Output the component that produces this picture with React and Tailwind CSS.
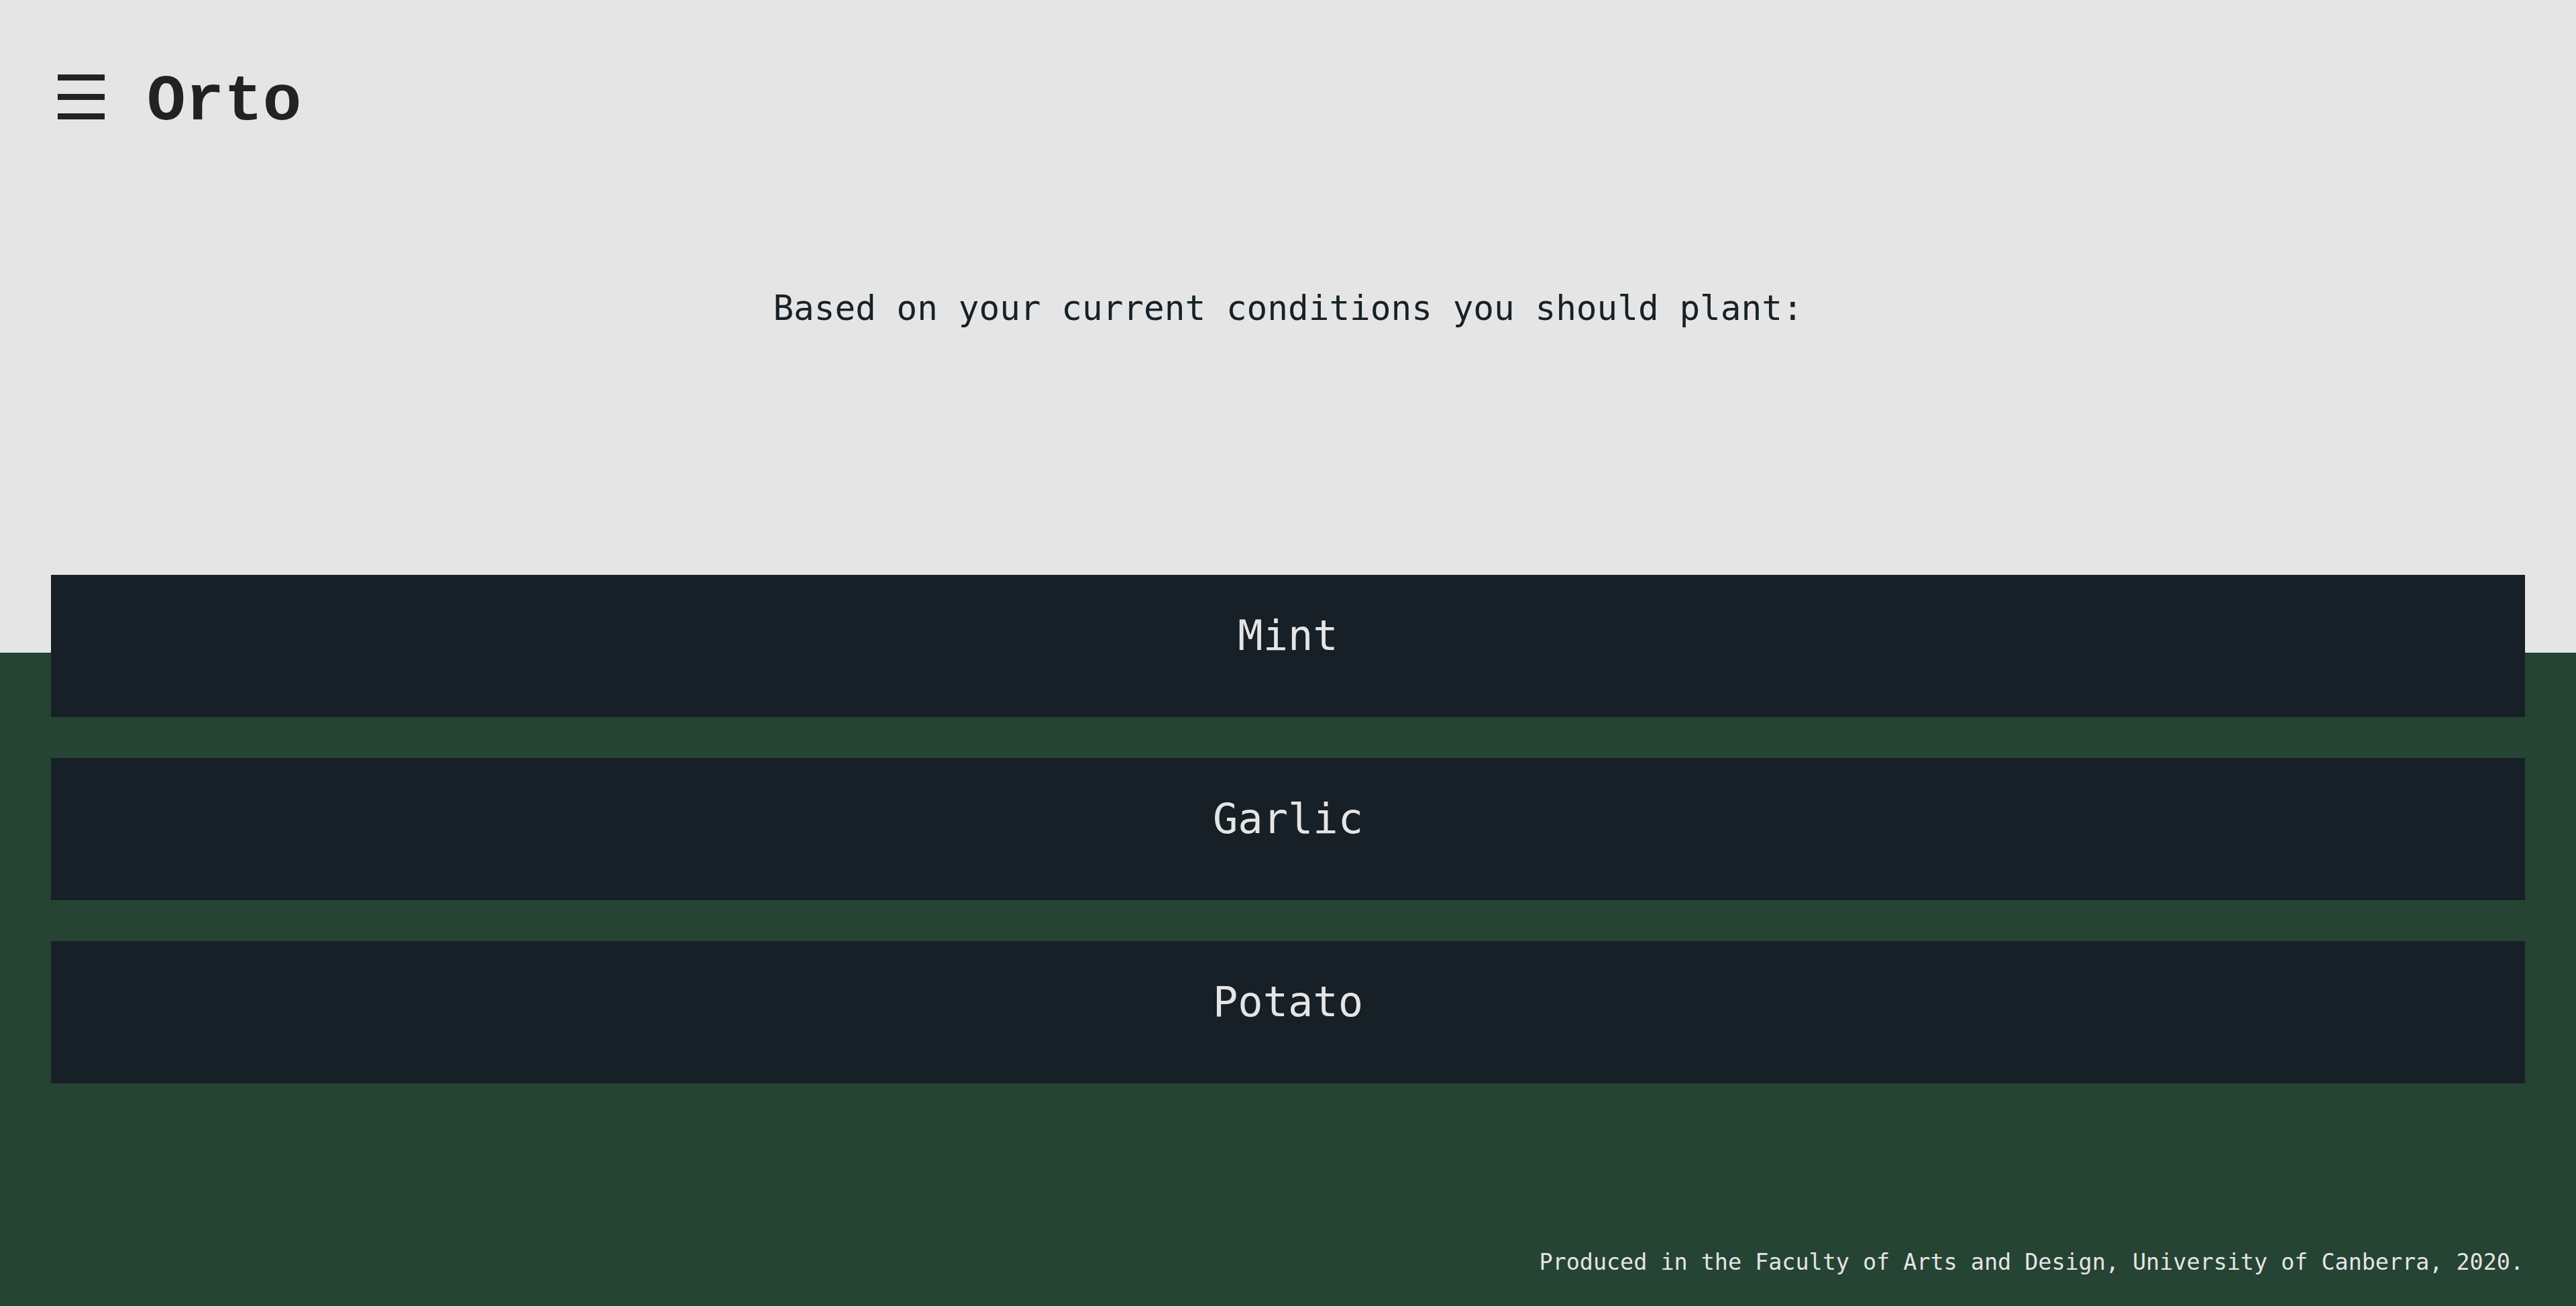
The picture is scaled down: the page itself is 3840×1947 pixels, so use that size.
import React from "react";

const plants = ["Mint", "Garlic", "Potato"];

const App = () => {
  return (
    <div className="min-h-screen flex flex-col bg-[#264434] font-['DejaVu_Sans_Mono',monospace]">
      {/* Top section */}
      <div className="h-[973px] bg-[#e5e5e5] shrink-0">
        <header className="flex items-start pt-[111px] pl-[86px]">
          <button className="flex flex-col justify-between w-[70px] h-[67px]" aria-label="Menu">
            <span className="block h-[9px] w-full bg-[#222222]"></span>
            <span className="block h-[9px] w-full bg-[#222222]"></span>
            <span className="block h-[9px] w-full bg-[#222222]"></span>
          </button>
          <h1 className="ml-[63px] -mt-[6px] text-[96px] leading-none font-bold text-[#222222] font-['Liberation_Mono','Courier_New',monospace]">
            Orto
          </h1>
        </header>

        <p className="mt-[233px] text-center text-[51px] leading-none text-[#172127]">
          Based on your current conditions you should plant:
        </p>
      </div>

      {/* Results */}
      <div className="-mt-[116px] px-[76px] flex flex-col gap-[61px]">
        {plants.map((plant) => (
          <div
            key={plant}
            className="h-[212px] bg-[#172026] flex justify-center items-start pt-[60px]"
          >
            <span className="text-[62px] leading-none text-[#e5e5e5]">{plant}</span>
          </div>
        ))}
      </div>

      {/* Footer */}
      <footer className="mt-auto pr-[78px] pb-[49px] text-right text-[33.4px] leading-none text-[#e5e5e5]">
        Produced in the Faculty of Arts and Design, University of Canberra, 2020.
      </footer>
    </div>
  );
};

export default App;
